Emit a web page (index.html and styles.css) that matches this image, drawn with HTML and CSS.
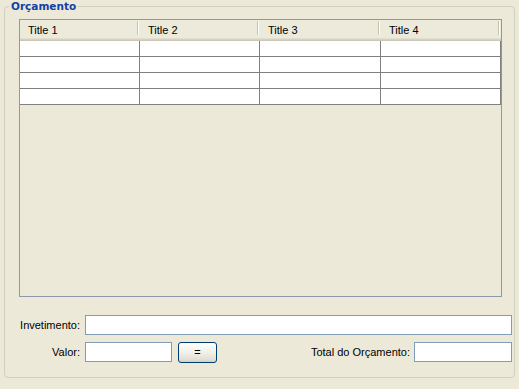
FILE: index.html
```html
<!DOCTYPE html>
<html lang="pt">
<head>
<meta charset="utf-8">
<title>Orçamento</title>
<link rel="stylesheet" href="styles.css">
</head>
<body>
<fieldset class="group">
  <legend class="group-title">Orçamento</legend>
  <div class="scroll-pane">
    <table class="grid">
      <colgroup>
        <col class="c1"><col class="c2"><col class="c3"><col class="c4">
      </colgroup>
      <thead>
        <tr><th>Title 1</th><th>Title 2</th><th>Title 3</th><th>Title 4</th></tr>
      </thead>
      <tbody>
        <tr><td></td><td></td><td></td><td></td></tr>
        <tr><td></td><td></td><td></td><td></td></tr>
        <tr><td></td><td></td><td></td><td></td></tr>
        <tr><td></td><td></td><td></td><td></td></tr>
      </tbody>
    </table>
  </div>
  <div class="form">
    <div class="form-row">
      <label class="lbl" for="inv">Invetimento:</label>
      <input id="inv" class="field field-wide" type="text">
    </div>
    <div class="form-row">
      <label class="lbl" for="valor">Valor:</label>
      <input id="valor" class="field field-valor" type="text">
      <button class="btn" type="button">=</button>
      <span class="spacer"></span>
      <label class="lbl-total" for="total">Total do Orçamento:</label>
      <input id="total" class="field field-total" type="text">
    </div>
  </div>
</fieldset>
</body>
</html>
```

FILE: styles.css
```css
html, body {
  margin: 0;
  padding: 0;
  background: #ECE9D8;
}
body {
  font: 11px "Liberation Sans", Arial, sans-serif;
  color: #000;
  height: 389px;
  overflow: hidden;
}
.group {
  margin: 0 4px;
  padding: 7px 12px 14px 14px;
  border: 1px solid #D0D0BF;
  border-radius: 4px;
  min-width: 0;
}
.group-title {
  margin-left: -10px;
  padding: 0 2px;
  font: bold 10.5px "DejaVu Sans", Verdana, sans-serif;
  line-height: 12px;
  color: #123FA8;
}
.scroll-pane {
  width: 481px;
  height: 276px;
  border: 1px solid #8A9AAB;
  background: #ECE9D8;
  overflow: hidden;
}
.grid {
  border-collapse: separate;
  border-spacing: 0;
  table-layout: fixed;
  width: 481px;
}
.c1, .c2, .c4 { width: 120px; }
.c3 { width: 121px; }
.grid th {
  box-sizing: border-box;
  height: 21px;
  padding: 0 0 0 8px;
  text-align: left;
  font-weight: normal;
  line-height: 20px;
  vertical-align: top;
  background:
    linear-gradient(#C5C2B2, #C5C2B2) no-repeat right 2px top 1px / 1px 14px,
    linear-gradient(#FFFFFF, #FFFFFF) no-repeat right 1px top 1px / 1px 14px,
    linear-gradient(to bottom,
      #EBEADB 0, #EBEADB 18px,
      #E2DECD 18px, #E2DECD 19px,
      #D6D2C2 19px, #D6D2C2 20px,
      #CBC7B8 20px, #CBC7B8 21px);
}
.grid td {
  box-sizing: border-box;
  height: 16px;
  padding: 0;
  background: #FFFFFF;
  border-right: 1px solid #808080;
  border-bottom: 1px solid #808080;
}
.form {
  margin: 18px -10px 0 0;
  display: flex;
  flex-direction: column;
  gap: 7px;
}
.form-row {
  display: flex;
  align-items: flex-start;
}
.lbl {
  width: 61px;
  margin-right: 5px;
  text-align: right;
  line-height: 20px;
}
.lbl-total {
  margin-right: 4px;
  line-height: 20px;
}
.field {
  box-sizing: border-box;
  height: 20px;
  margin: 0;
  padding: 0 2px;
  border: 1px solid #7F9DB9;
  background: #FFFFFF;
  font: inherit;
}
.field-wide { flex: 1; }
.field-valor { width: 87px; }
.field-total { width: 98px; }
.btn {
  box-sizing: border-box;
  width: 39px;
  height: 21px;
  margin: 0 0 0 6px;
  padding: 0;
  border: 1px solid #003C74;
  border-radius: 3px;
  background: linear-gradient(to bottom, #FFFFFF 0%, #F4F3EE 40%, #E3E1D6 85%, #D6D0C5 100%);
  font: 11px "Liberation Sans", Arial, sans-serif;
  color: #000;
  line-height: 19px;
}
.spacer { flex: 1; }
```
